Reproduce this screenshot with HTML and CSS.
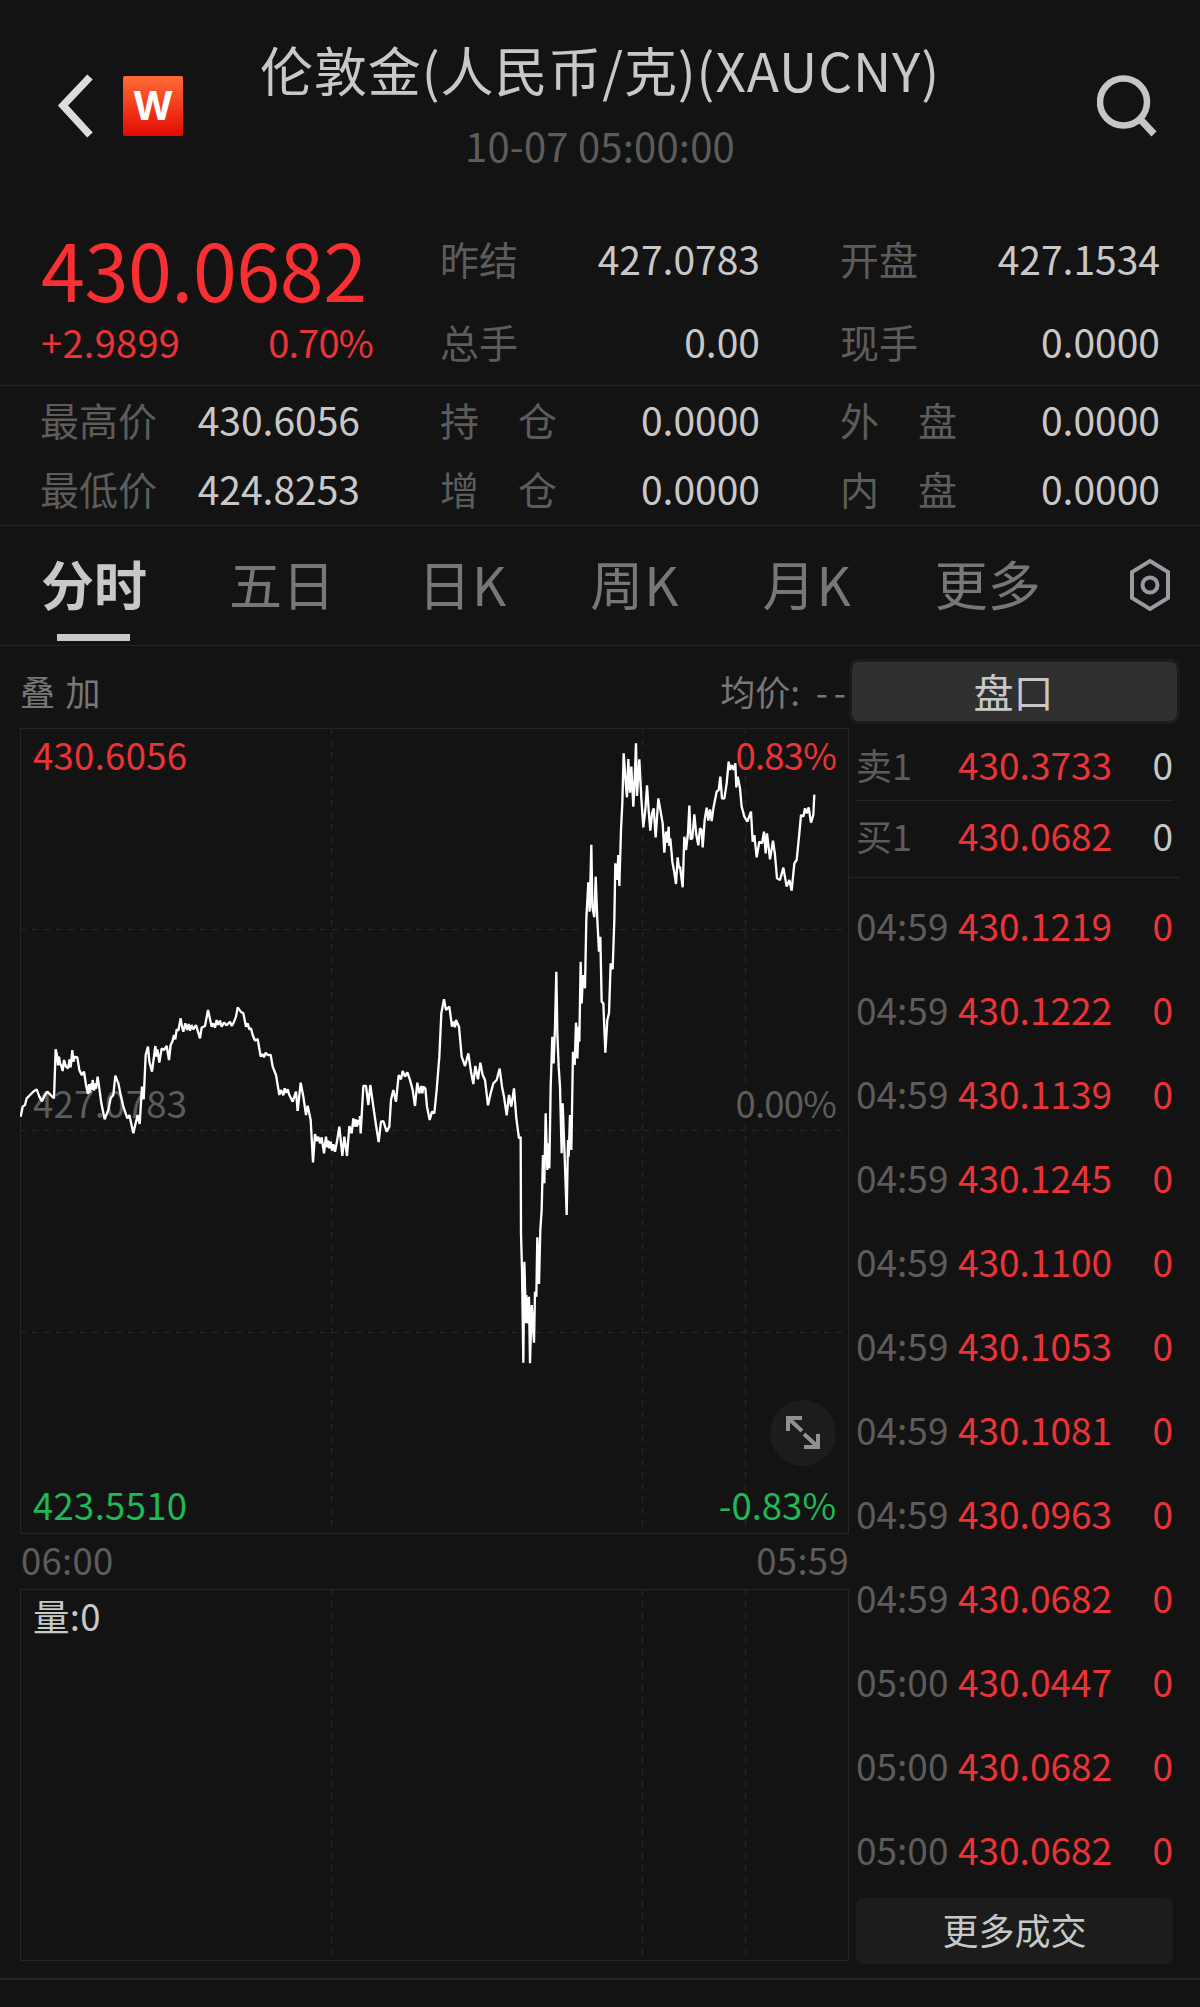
FILE: index.html
```html
<!DOCTYPE html>
<html lang="zh-CN">
<head>
    <meta charset="UTF-8">
    <meta name="viewport" content="width=device-width, initial-scale=1.0">
    <title>伦敦金(人民币/克)(XAUCNY)</title>
    <link rel="stylesheet" href="styles.css">
</head>
<body>
    <header class="header">
        <div class="header-left">
            <svg class="back" width="38" height="64" viewBox="0 0 38 64"><path d="M33 3 L6 31.500 L33 61" fill="none" stroke="#dcdcdc" stroke-width="7.500"/></svg>
            <div class="logo">W</div>
        </div>
        <div class="header-title">
            <h1>伦敦金(人民币/克)(XAUCNY)</h1>
            <p>10-07 05:00:00</p>
        </div>
        <div class="header-right">
            <svg width="60" height="62" viewBox="0 0 60 62"><circle cx="26.500" cy="27" r="23.500" fill="none" stroke="#c6c6c6" stroke-width="6.500"/><path d="M43 44 L57 59" stroke="#c6c6c6" stroke-width="7"/></svg>
        </div>
    </header>

    <section class="quote">
        <div class="price-box">
            <div class="price">430.0682</div>
            <div class="change"><span>+2.9899</span><span class="percent">0.70%</span></div>
        </div>
        <div class="cell"><label>昨结</label><span>427.0783</span></div>
        <div class="cell"><label>开盘</label><span>427.1534</span></div>
        <div class="cell"><label>总手</label><span>0.00</span></div>
        <div class="cell"><label>现手</label><span>0.0000</span></div>
    </section>

    <section class="detail">
        <div class="cell"><label>最高价</label><span>430.6056</span></div>
        <div class="cell"><label>持　仓</label><span>0.0000</span></div>
        <div class="cell"><label>外　盘</label><span>0.0000</span></div>
        <div class="cell"><label>最低价</label><span>424.8253</span></div>
        <div class="cell"><label>增　仓</label><span>0.0000</span></div>
        <div class="cell"><label>内　盘</label><span>0.0000</span></div>
    </section>

    <nav class="tabs">
        <a class="tab active">分时</a>
        <a class="tab">五日</a>
        <a class="tab tab-k">日K</a>
        <a class="tab tab-k">周K</a>
        <a class="tab tab-k">月K</a>
        <a class="tab">更多</a>
        <svg class="settings" width="42" height="54" viewBox="0 0 42 54"><path d="M21 3 L39 14 V40 L21 51 L3 40 V14 Z" fill="none" stroke="#9a9aa2" stroke-width="4"/><circle cx="21" cy="27" r="7.500" fill="none" stroke="#9a9aa2" stroke-width="4"/></svg>
    </nav>

    <main class="main">
        <div class="left">
            <div class="info"><span class="overlay">叠 加</span><span>均价: <i>--</i></span></div>

            <div class="chart">
                <svg class="grid" width="829" height="806" viewBox="0 0 829 806">
                    <path d="M311.500 0 V806 M622.500 0 V806 M725.500 0 V806 M0 201.500 H829 M0 402.500 H829 M0 604.500 H829"/>
                </svg>
                <span class="mark top-left red">430.6056</span>
                <span class="mark percent top-right red">0.83%</span>
                <span class="mark mid-left">427.0783</span>
                <span class="mark percent mid-right">0.00%</span>
                <span class="mark bottom-left green">423.5510</span>
                <span class="mark bottom-right green">-0.83%</span>
                <!-- price line, drawn at three units per pixel -->
                <svg class="line" width="828" height="805" viewBox="0 0 2484 2415">
                    <polyline transform="translate(-60 696)" points="62,470 68,440 75,435 80,415 90,405 100,395 110,388 118,410 126,424 135,405 142,395 152,405 162,415 167,268 172,290 174,316 177,290 180,310 184,318 188,333 192,300 198,320 204,325 209,298 212,322 217,270 220,305 224,290 232,292 238,330 245,345 252,335 258,375 264,402 267,372 270,398 274,370 276,390 278,360 282,392 285,370 288,386 293,350 298,385 304,430 314,478 325,450 332,415 340,405 346,347 355,370 362,405 370,440 382,475 388,465 400,520 408,485 413,465 419,492 426,380 431,418 437,285 444,260 448,305 456,335 466,258 469,290 472,268 478,308 485,265 492,270 500,258 507,300 512,255 517,245 522,225 526,238 530,208 535,212 542,175 546,200 550,215 556,190 561,210 566,192 570,212 575,195 580,208 588,195 600,235 605,203 615,198 624,150 635,200 640,190 645,203 650,180 655,195 660,182 665,200 672,188 680,196 690,185 695,198 700,190 708,170 713,142 722,155 730,160 738,200 743,190 748,208 753,205 758,225 765,242 773,237 782,290 787,282 792,292 797,278 803,285 812,285 818,320 828,345 838,405 843,390 850,406 854,385 858,398 863,388 868,405 878,425 888,395 893,452"/>
                    <polyline transform="translate(780 696)" points="53,453 62,368 70,410 78,465 83,437 92,480 99,607 105,522 110,543 115,530 120,550 125,532 132,580 138,530 142,562 145,542 148,565 152,545 156,572 160,553 165,575 170,550 178,500 187,588 193,530 201,588 208,498 215,520 220,475 223,500 226,478 230,500 234,480 238,495 240,468 242,520 250,378 258,378 265,435 271,375 280,440 288,495 296,546 303,485 310,483 320,515 328,500 333,420 340,390 348,425 356,345 363,358 368,333 375,350 382,337 390,360 398,390 405,438 412,368 418,400 424,378 427,400 430,380 436,385 441,440 449,480 456,455 463,460 470,390 478,290 484,160 492,118 498,150 508,140 516,200 521,185 525,202 528,180 537,200 545,290 555,318 565,280 573,335 580,372 586,318 594,358 601,308 608,345 615,360 624,436 632,400 640,370 650,360 659,326 666,380 672,410 680,466 687,405 694,440 702,385 709,475 717,535 722,530"/>
                    <polyline transform="translate(1380 516)" points="122,710 123,1000 126,1110 130,1388 133,1085 138,1270 139,1185 145,1270 147,1190 150,1390 155,1215 162,1328 165,1175 169,1190 172,1012 177,1152 181,990 185,930 189,765 193,850 197,640 202,810 205,730 208,805 212,560 217,410 221,490 225,380 229,215 232,400 236,500 240,560 245,760 248,610 254,770 260,945 264,720 266,770 270,645 274,750 279,455 284,495 288,368 292,475 296,380 298,425 302,185 305,310 309,225 315,265 319,55"/>
                    <polyline transform="translate(1560 -24)" points="139,595 145,487 149,575 154,374 157,560 163,592 167,470 172,600 177,695 181,650 185,845 190,850 196,998 202,900 207,880 212,730 218,748 223,600 226,430 231,480 235,405 238,498 243,330 247,250 251,100 256,170 258,200 261,232 265,117 268,190 270,218 274,140 277,200 280,260 284,180 288,70 291,228 298,118 304,235 310,322 316,270 321,196 327,285 331,332 336,280 341,265 347,352 355,235 362,275 368,310 373,398 378,335 382,368 386,320 388,378 391,355 397,425 402,452 408,492 413,412 417,445 420,440 428,502 433,350 438,390 444,340 448,257 452,358 457,355 463,283 469,345 475,376 480,325 485,330 488,382 494,300 500,263 505,302 510,268 515,303 521,260 530,215 536,210 541,170 546,235 553,236 560,190 566,125 570,150 575,135 580,150 586,130 589,202 593,170 600,205 605,260 613,290 622,305 633,275 638,365 643,345 650,412 658,365 666,370 672,335 677,400 681,340 690,418 699,362 705,405 711,475 720,480 730,443 740,500 748,480 755,512 763,430 770,420 778,340 783,285 790,290 795,265 800,280 806,262 813,308 820,285 823,224"/>
                </svg>
                <div class="expand">
                    <svg width="66" height="66" viewBox="0 0 66 66"><path d="M18 31 V18 H32 M18 18 L32 31 M48 34 V47 H34 M48 47 L34 34" fill="none" stroke="#919191" stroke-width="4"/></svg>
                </div>
            </div>

            <div class="times"><span>06:00</span><span>05:59</span></div>

            <div class="volume">
                <svg class="grid" width="829" height="372" viewBox="0 0 829 372"><path d="M311.500 0 V372 M622.500 0 V372 M725.500 0 V372"/></svg>
                <span class="mark">量:0</span>
            </div>
        </div>

        <aside class="right">
            <div class="book-title">盘口</div>
            <div class="book-row sell"><span>卖1</span><b>430.3733</b><em>0</em></div>
            <div class="book-row buy"><span>买1</span><b>430.0682</b><em>0</em></div>
            <div class="ticks">
                <div class="tick"><span>04:59</span><b>430.1219</b><em>0</em></div>
                <div class="tick"><span>04:59</span><b>430.1222</b><em>0</em></div>
                <div class="tick"><span>04:59</span><b>430.1139</b><em>0</em></div>
                <div class="tick"><span>04:59</span><b>430.1245</b><em>0</em></div>
                <div class="tick"><span>04:59</span><b>430.1100</b><em>0</em></div>
                <div class="tick"><span>04:59</span><b>430.1053</b><em>0</em></div>
                <div class="tick"><span>04:59</span><b>430.1081</b><em>0</em></div>
                <div class="tick"><span>04:59</span><b>430.0963</b><em>0</em></div>
                <div class="tick"><span>04:59</span><b>430.0682</b><em>0</em></div>
                <div class="tick"><span>05:00</span><b>430.0447</b><em>0</em></div>
                <div class="tick"><span>05:00</span><b>430.0682</b><em>0</em></div>
                <div class="tick"><span>05:00</span><b>430.0682</b><em>0</em></div>
            </div>
            <div class="more">更多成交</div>
        </aside>
    </main>
</body>
</html>
```
FILE: styles.css
```css
* {
    box-sizing: border-box;
}
body {
    margin: 0;
    width: 1200px;
    height: 2007px;
    overflow: hidden;
    background-color: #131313;
    color: #c8c8c8;
    font-family: "Noto Sans CJK SC", sans-serif;
}
h1, p {
    margin: 0;
    font-weight: 400;
}
b, em, i {
    font-weight: 400;
    font-style: normal;
}
svg {
    display: block;
}

/* header */
.header {
    display: grid;
    grid-template-columns: 1fr auto 1fr;
    align-items: center;
    height: 212px;
}
.header-left {
    display: flex;
    align-items: center;
    padding-left: 57px;
    gap: 28px;
}
.logo {
    width: 60px;
    height: 60px;
    border-radius: 2px;
    background: linear-gradient(#ff6c38, #e30b02);
    color: #fff;
    font-family: Inter, sans-serif;
    font-size: 39px;
    font-weight: 700;
    line-height: 60px;
    text-align: center;
}
.header-title {
    text-align: center;
    line-height: 76px;
    padding-top: 1px;
}
.header-title h1 {
    font-size: 53px;
    letter-spacing: 0.9px;
}
.header-title p {
    font-size: 40px;
    letter-spacing: 0.2px;
    color: #5c5c5c;
}
.header-right {
    display: flex;
    justify-content: flex-end;
    padding-right: 43px;
}

/* quote */
.quote {
    display: grid;
    grid-template-columns: repeat(3, 400px);
    grid-template-rows: 83px 83px;
    padding: 5px 0 2px;
    border-bottom: 1px solid #252525;
}
.price-box {
    grid-row: span 2;
    padding: 0 27px 0 41px;
    color: #f92f32;
}
.price {
    font-size: 79px;
    line-height: 102px;
    letter-spacing: -0.4px;
}
.change {
    display: flex;
    justify-content: space-between;
    font-size: 38px;
    line-height: 45px;
    letter-spacing: 0.3px;
    color: #ea3437;
}
.percent {
    letter-spacing: -0.8px;
}
.cell {
    display: flex;
    justify-content: space-between;
    padding: 0 40px 0 40px;
    font-size: 39px;
    line-height: 83px;
}
.cell label {
    color: #5c5c5c;
}
.detail {
    display: grid;
    grid-template-columns: repeat(3, 400px);
    row-gap: 3px;
    padding: 0 0 4px;
    border-bottom: 1px solid #252525;
}
.detail .cell {
    line-height: 66px;
}

/* tabs */
.tabs {
    display: flex;
    align-items: center;
    gap: 83px;
    height: 120px;
    padding: 0 29px 0 41px;
    border-bottom: 1px solid #252525;
}
.tab {
    position: relative;
    font-size: 53px;
    line-height: 119px;
    margin-top: -4px;
    color: #777;
}
.tab-k {
    letter-spacing: 1px;
}
.tab.active {
    margin-right: -1px;
    color: #c8c8c8;
    font-weight: 700;
}
.tab.active::after {
    content: "";
    position: absolute;
    left: 16px;
    bottom: 2px;
    width: 73px;
    height: 7px;
    background-color: #c8c8c8;
}
.settings {
    margin-left: auto;
    margin-top: -2px;
}

/* chart */
.main {
    display: flex;
    height: 1334px;
    border-bottom: 2px solid #252525;
}
.left {
    width: 849px;
    padding-left: 20px;
}
.info {
    display: flex;
    justify-content: space-between;
    height: 82px;
    padding-top: 4px;
    font-size: 35px;
    line-height: 82px;
    white-space: nowrap;
    color: #777;
}
.info .overlay {
    letter-spacing: 1.3px;
}
.info i {
    margin-left: 8px;
    margin-right: -3px;
    letter-spacing: 6px;
}
.chart, .volume {
    position: relative;
    border: 1px solid #252525;
}
.chart {
    height: 806px;
}
.volume {
    height: 372px;
}
.grid, .line {
    position: absolute;
    top: -1px;
    left: -1px;
}
.grid path {
    fill: none;
    stroke: #262626;
    stroke-width: 1;
    stroke-dasharray: 6 6;
}
.line polyline {
    fill: none;
    stroke: #fff;
    stroke-width: 7;
    stroke-linejoin: bevel;
}
.mark {
    position: absolute;
    font-size: 36.5px;
    line-height: 50px;
    letter-spacing: 0.3px;
    color: #5c5c5c;
}
.mark.percent {
    letter-spacing: -0.8px;
}
.mark.red { color: #ea3437; }
.mark.green { color: #1fb857; }
.top-left { top: 1px; left: 12px; }
.top-right { top: 1px; right: 12px; }
.mid-left { top: 349px; left: 12px; }
.mid-right { top: 349px; right: 12px; }
.bottom-left { bottom: 3px; left: 12px; }
.bottom-right {
    right: 12px;
    bottom: 3px;
    letter-spacing: 0;
}
.volume .mark {
    top: 1px;
    left: 12px;
    color: #c8c8c8;
}
.expand {
    position: absolute;
    right: 12px;
    bottom: 67px;
    width: 66px;
    height: 66px;
    border-radius: 50%;
    background-color: #1c1c1c;
}
.times {
    display: flex;
    justify-content: space-between;
    height: 55px;
    padding: 1px 0 0 1px;
    font-size: 36.5px;
    line-height: 50px;
    letter-spacing: 0.3px;
    color: #5c5c5c;
}

/* order book */
.right {
    width: 331px;
    padding-top: 13px;
}
.book-title {
    height: 65px;
    border: 3px solid #1c1c1c;
    border-radius: 9px;
    background-color: #303030;
    background-clip: padding-box;
    font-size: 40px;
    line-height: 58px;
    text-align: center;
    text-indent: -2px;
}
.book-row, .tick {
    display: grid;
    grid-template-columns: 102px 1fr auto;
    font-size: 37px;
}
.book-row span, .tick span {
    color: #5c5c5c;
}
.book-row span {
    font-size: 36px;
}
.book-row b, .tick b {
    color: #ea3437;
}
.tick em {
    color: #ea3437;
}
.sell {
    height: 77px;
    margin: 0 7px;
    padding-top: 4px;
    line-height: 72px;
    border-bottom: 1px solid #252525;
}
.buy {
    height: 77px;
    padding: 0 7px;
    line-height: 68px;
    border-bottom: 1px solid #252525;
}
.ticks {
    padding: 5px 7px 0;
}
.tick {
    line-height: 84px;
}
.more {
    height: 66px;
    margin: 7px 7px 0;
    border-radius: 8px;
    background-color: #1c1c1c;
    font-size: 36px;
    line-height: 63px;
    text-align: center;
}
```
